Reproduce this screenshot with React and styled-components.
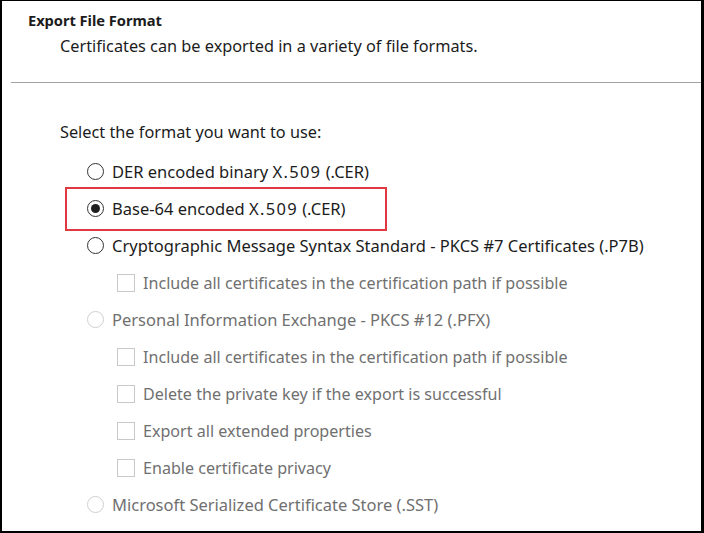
import React from "react";
import styled, { createGlobalStyle, css } from "styled-components";

const Global = createGlobalStyle`
  html, body { margin: 0; padding: 0; background: #000; }
  #root { width: 704px; height: 533px; }
`;

const Frame = styled.div`
  box-sizing: border-box;
  width: 704px;
  height: 533px;
  background: #fff;
  border-style: solid;
  border-color: #000;
  border-width: 1px 3px 2px 2px;
  font-family: "Noto Sans", "Open Sans", sans-serif;
  color: #1c1c1c;
  overflow: hidden;
`;

const Header = styled.header`
  padding: 10px 0 0 26px;
  height: 81px;
  box-sizing: border-box;
`;

const Title = styled.h1`
  margin: 0;
  font-size: 14.7px;
  font-weight: 700;
  line-height: 18px;
  letter-spacing: -0.05px;
`;

const Subtitle = styled.p`
  margin: 7px 0 0 32px;
  font-size: 16.3px;
  line-height: 20px;
`;

const Divider = styled.hr`
  margin: 0 0 0 9px;
  border: 0;
  border-top: 1px solid #a3a3a3;
  height: 0;
`;

const Body = styled.section`
  padding: 39px 0 0 58px;
`;

const Prompt = styled.p`
  margin: 0 0 11px 0;
  font-size: 16.3px;
  line-height: 20px;
`;

const Options = styled.div`
  display: flex;
  flex-direction: column;
  padding-left: 27px;
`;

const Row = styled.label`
  position: relative;
  display: flex;
  align-items: center;
  gap: 8px;
  height: 37px;
  font-size: ${(p) => (p.$nested ? "16.1px" : "16.5px")};
  white-space: nowrap;
  color: ${(p) => (p.$disabled ? "#707070" : "#1c1c1c")};
  padding-left: ${(p) => (p.$nested ? "30px" : "0")};
  ${(p) =>
    p.$highlight &&
    css`
      &::after {
        content: "";
        position: absolute;
        left: -22px;
        top: -3px;
        width: 322px;
        height: 44px;
        box-sizing: border-box;
        border: 2px solid #e0393f;
        pointer-events: none;
      }
    `}
`;

const Label = styled.span`
  white-space: pre;
`;

const Wide = styled.span`
  letter-spacing: 1.3px;
`;

const Radio = styled.span`
  box-sizing: border-box;
  width: 17px;
  height: 17px;
  border-radius: 50%;
  border: 1.5px solid ${(p) => (p.$disabled ? "#cfcfcf" : "#333")};
  display: flex;
  align-items: center;
  justify-content: center;
  flex: none;
  &::before {
    content: "";
    display: ${(p) => (p.$checked ? "block" : "none")};
    width: 9px;
    height: 9px;
    border-radius: 50%;
    background: #1f1f1f;
  }
`;

const Check = styled.span`
  box-sizing: border-box;
  width: 18px;
  height: 18px;
  border: 1px solid #c9c9c9;
  background: #fff;
  flex: none;
`;

const items = [
  { type: "radio", label: ["DER encoded binary ", "X.509", " (.CER)"] },
  { type: "radio", label: ["Base-64 encoded ", "X.509", " (.CER)"], checked: true, highlight: true },
  { type: "radio", label: ["Cryptographic Message Syntax Standard - PKCS #7 Certificates (.P7B)"] },
  { type: "check", label: ["Include all certificates in the certification path if possible"], disabled: true },
  { type: "radio", label: ["Personal Information Exchange - PKCS #12 (.PFX)"], disabled: true },
  { type: "check", label: ["Include all certificates in the certification path if possible"], disabled: true },
  { type: "check", label: ["Delete the private key if the export is successful"], disabled: true },
  { type: "check", label: ["Export all extended properties"], disabled: true },
  { type: "check", label: ["Enable certificate privacy"], disabled: true },
  { type: "radio", label: ["Microsoft Serialized Certificate Store (.SST)"], disabled: true },
];

export default function App() {
  return (
    <>
      <Global />
      <Frame>
        <Header>
          <Title>Export File Format</Title>
          <Subtitle>Certificates can be exported in a variety of file formats.</Subtitle>
        </Header>
        <Divider />
        <Body>
          <Prompt>Select the format you want to use:</Prompt>
          <Options>
            {items.map((it, i) => (
              <Row
                key={i}
                $disabled={it.disabled}
                $nested={it.type === "check"}
                $highlight={it.highlight}
              >
                {it.type === "radio" ? (
                  <Radio $checked={it.checked} $disabled={it.disabled} />
                ) : (
                  <Check />
                )}
                <Label>
                  {it.label.map((part, j) =>
                    part === "X.509" ? <Wide key={j}>{part}</Wide> : part
                  )}
                </Label>
              </Row>
            ))}
          </Options>
        </Body>
      </Frame>
    </>
  );
}
